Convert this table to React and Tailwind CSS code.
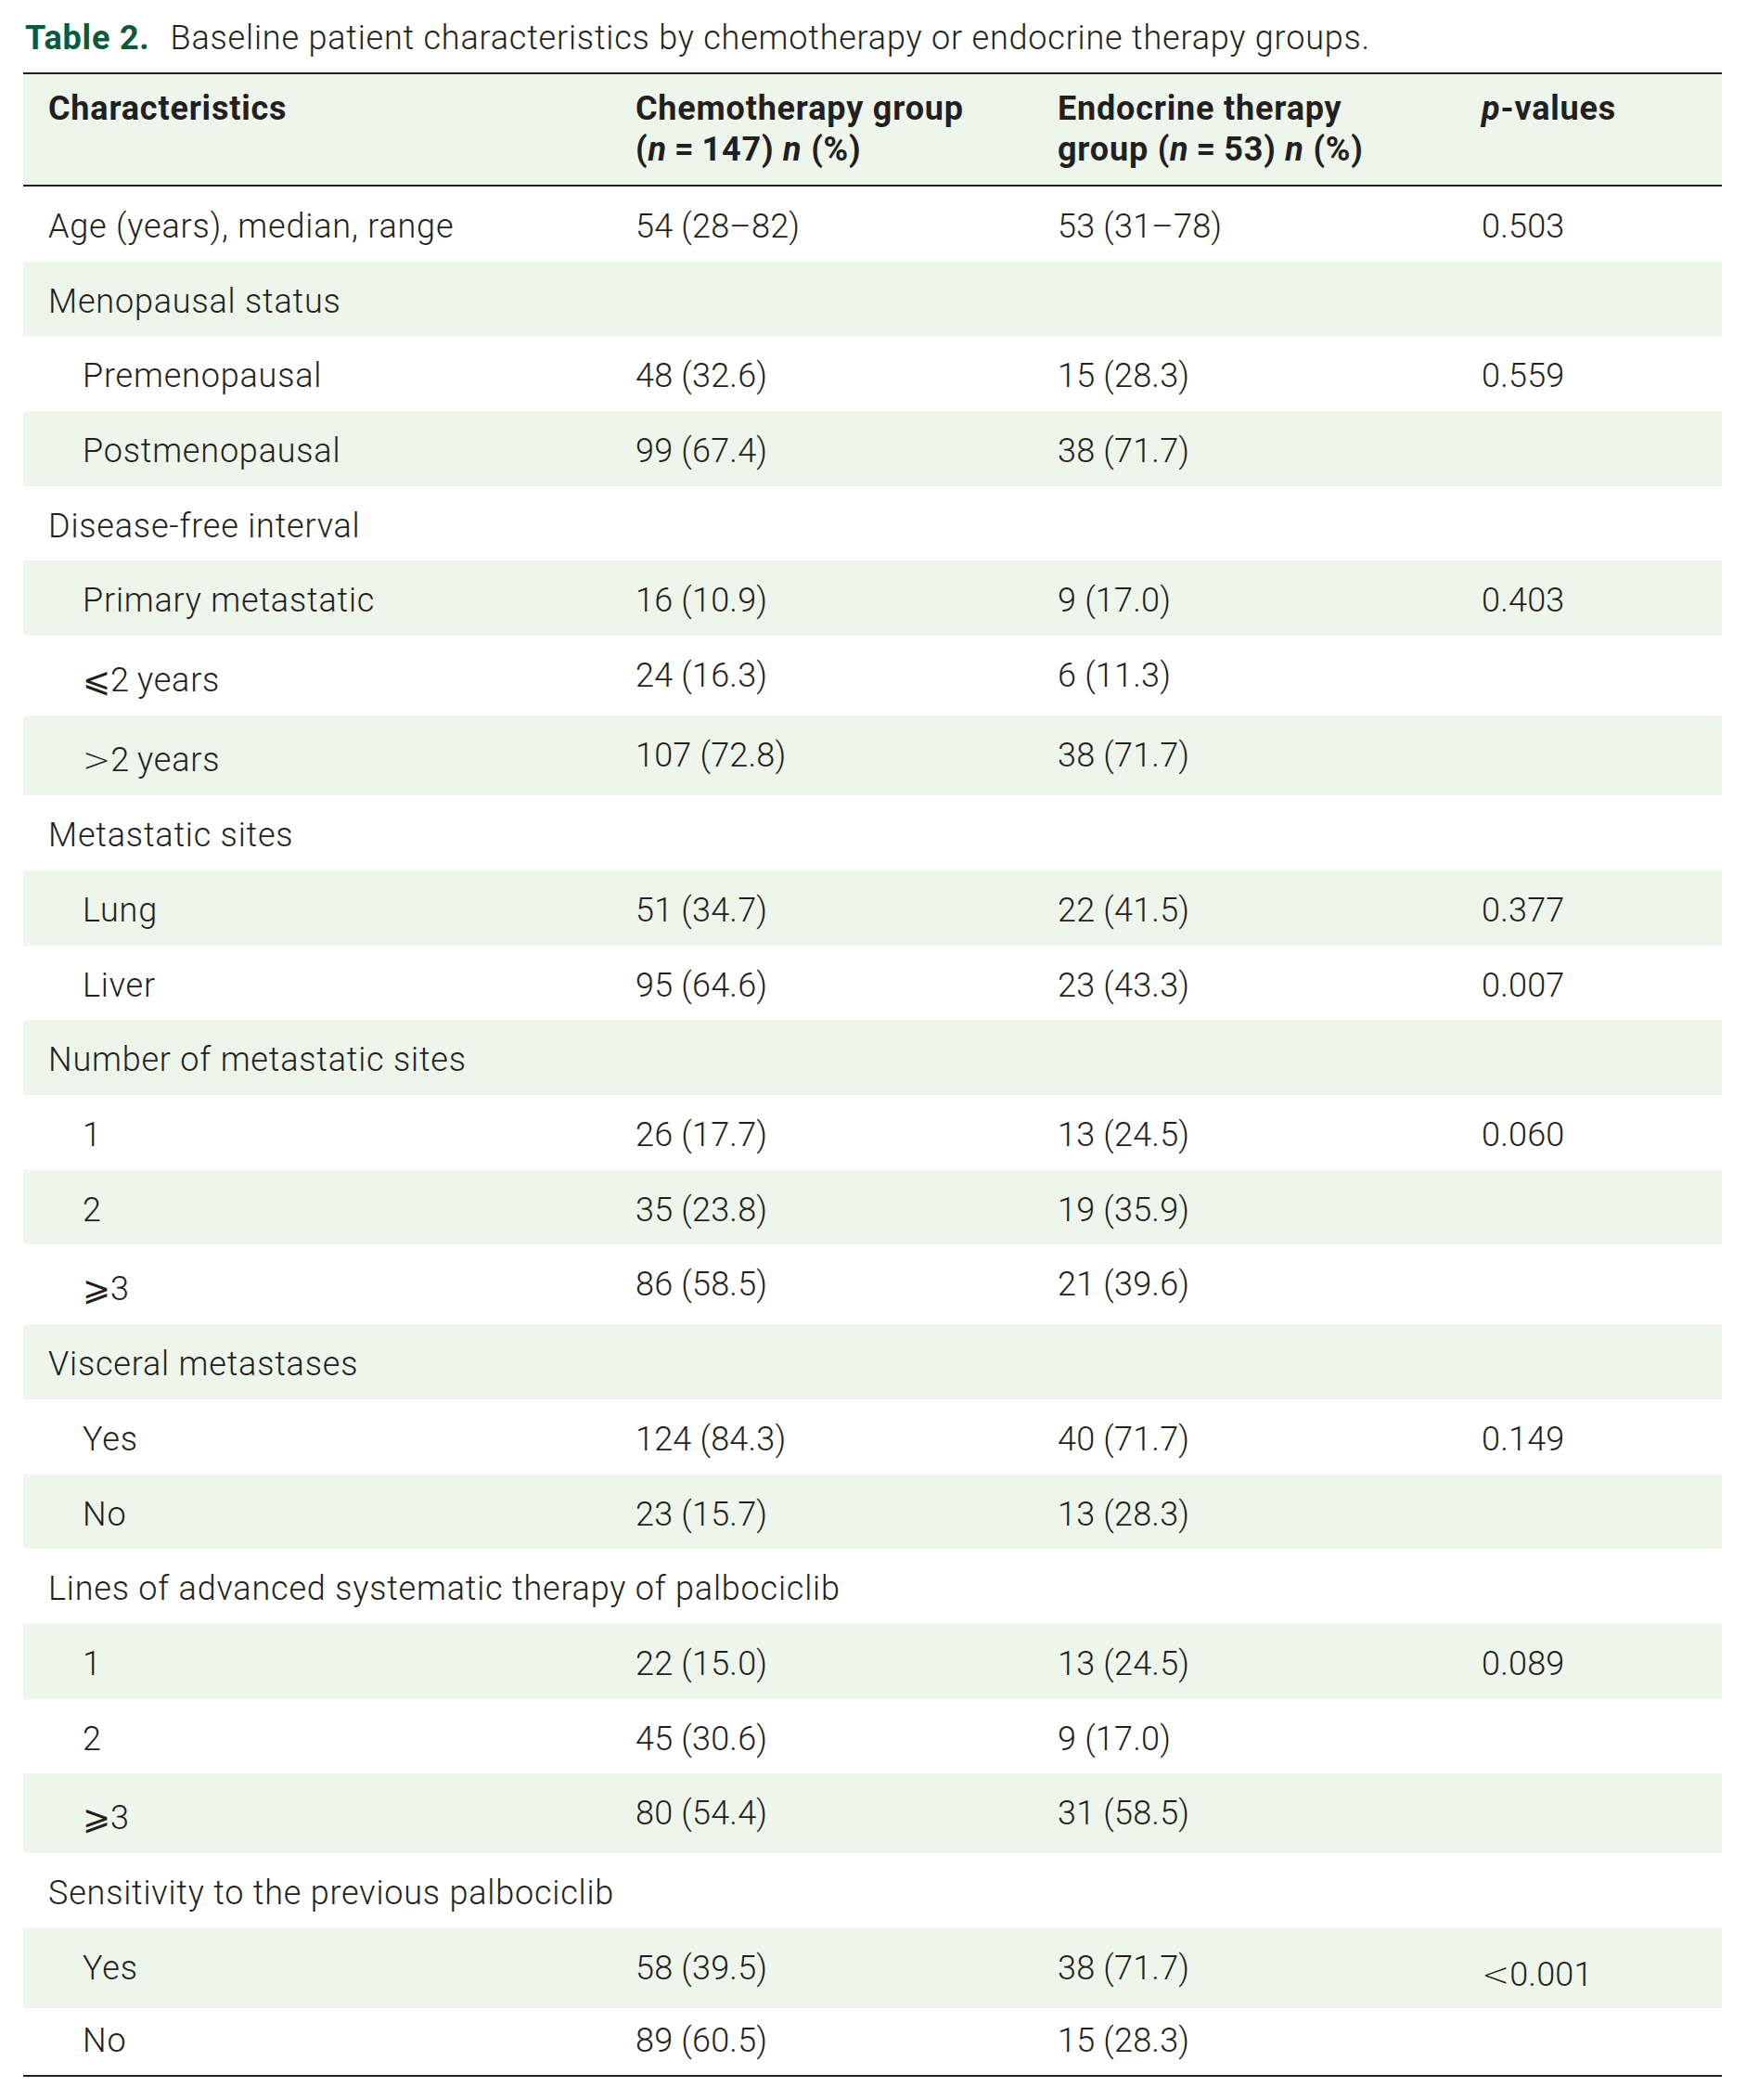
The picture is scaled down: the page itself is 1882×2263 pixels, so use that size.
import React from "react";

const ink = "text-[#231f20]";

const Sym = ({ children }) => (
  <span className="font-['DejaVu_Sans',sans-serif] font-extralight tracking-normal">{children}</span>
);

const N = () => <span className="italic">n</span>;

const rows = [
  { label: "Age (years), median, range", c: "54 (28–82)", e: "53 (31–78)", p: "0.503" },
  { label: "Menopausal status" },
  { label: "Premenopausal", sub: true, c: "48 (32.6)", e: "15 (28.3)", p: "0.559" },
  { label: "Postmenopausal", sub: true, c: "99 (67.4)", e: "38 (71.7)" },
  { label: "Disease-free interval" },
  { label: "Primary metastatic", sub: true, c: "16 (10.9)", e: "9 (17.0)", p: "0.403" },
  { label: <><Sym>⩽</Sym>2{"\u2009"}years</>, sym: true, sub: true, c: "24 (16.3)", e: "6 (11.3)" },
  { label: <><Sym>&gt;</Sym>2{"\u2009"}years</>, sym: true, sub: true, c: "107 (72.8)", e: "38 (71.7)" },
  { label: "Metastatic sites" },
  { label: "Lung", sub: true, c: "51 (34.7)", e: "22 (41.5)", p: "0.377" },
  { label: "Liver", sub: true, c: "95 (64.6)", e: "23 (43.3)", p: "0.007" },
  { label: "Number of metastatic sites" },
  { label: "1", sub: true, c: "26 (17.7)", e: "13 (24.5)", p: "0.060" },
  { label: "2", sub: true, c: "35 (23.8)", e: "19 (35.9)" },
  { label: <><Sym>⩾</Sym>3</>, sym: true, sub: true, c: "86 (58.5)", e: "21 (39.6)" },
  { label: "Visceral metastases" },
  { label: "Yes", sub: true, c: "124 (84.3)", e: "40 (71.7)", p: "0.149" },
  { label: "No", sub: true, c: "23 (15.7)", e: "13 (28.3)" },
  { label: "Lines of advanced systematic therapy of palbociclib" },
  { label: "1", sub: true, c: "22 (15.0)", e: "13 (24.5)", p: "0.089" },
  { label: "2", sub: true, c: "45 (30.6)", e: "9 (17.0)" },
  { label: <><Sym>⩾</Sym>3</>, sym: true, sub: true, c: "80 (54.4)", e: "31 (58.5)" },
  { label: "Sensitivity to the previous palbociclib" },
  { label: "Yes", sub: true, c: "58 (39.5)", e: "38 (71.7)", p: <><Sym>&lt;</Sym>0.001</>, psym: true },
  { label: "No", sub: true, c: "89 (60.5)", e: "15 (28.3)", last: true },
];

const Row = ({ row, green }) => {
  const height = row.last ? "h-[72px]" : row.sym || row.psym ? "h-[86px]" : "h-[80.7px]";
  const pad = row.last ? "pt-[13px]" : "pt-[21px]";
  return (
    <div
      className={`grid grid-cols-[633px_455px_457px_286px] ${height} ${green ? "bg-[#eef6ec]" : "bg-white"}`}
    >
      <div className={`${row.sub ? "pl-[64px]" : "pl-[27px]"} ${row.sym ? "pt-[26px]" : pad} whitespace-nowrap`}>
        {row.label}
      </div>
      <div className={`pl-[27px] tracking-[0.2px] ${pad}`}>{row.c}</div>
      <div className={`pl-[27px] tracking-[0.2px] ${pad}`}>{row.e}</div>
      <div className={`pl-[27px] tracking-[0.2px] ${row.psym ? "pt-[28px]" : pad}`}>{row.p}</div>
    </div>
  );
};

export default function App() {
  return (
    <div className={`min-h-[2263px] w-[1882px] bg-white ${ink} font-['Roboto',sans-serif] text-[36px] leading-[44px] font-light tracking-[0.8px]`}>
      <div className="pl-[27px] pt-[19px] whitespace-nowrap">
        <span className="font-bold text-[#0b5a3c]">Table 2.</span>
        <span className="ml-[22px]">
          Baseline patient characteristics by chemotherapy or endocrine therapy groups.
        </span>
      </div>

      <div className="ml-[25px] mt-[15px] w-[1831px] border-y-2 border-[#231f20]">
        <div className="grid grid-cols-[633px_455px_457px_286px] bg-[#eef6ec] pt-[15px] pb-[16px] font-bold border-b-2 border-[#231f20]">
          <div className="pl-[27px]">Characteristics</div>
          <div className="pl-[27px]">
            Chemotherapy group
            <br />
            (<N />{"\u2009"}={"\u2009"}147) <N /> (%)
          </div>
          <div className="pl-[27px]">
            Endocrine therapy
            <br />
            group (<N />{"\u2009"}={"\u2009"}53) <N /> (%)
          </div>
          <div className="pl-[27px]">
            <span className="italic">p</span>-values
          </div>
        </div>

        {rows.map((row, i) => (
          <Row key={i} row={row} green={i % 2 === 1} />
        ))}
      </div>
    </div>
  );
}
